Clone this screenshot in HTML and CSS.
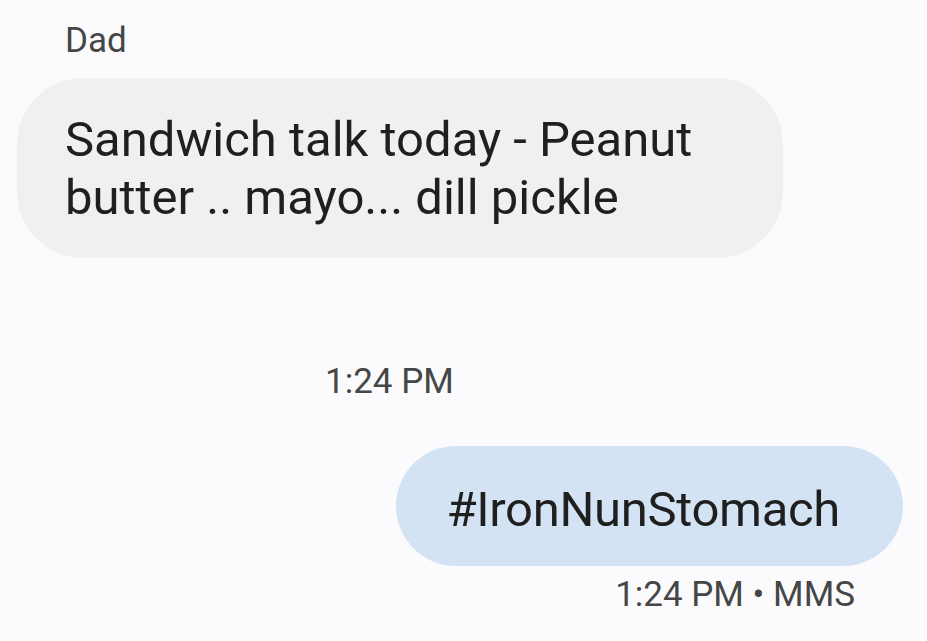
FILE: index.html
```html
<!DOCTYPE html>
<html>
<head>
<meta charset="utf-8">
<link rel="stylesheet" href="styles.css">
</head>
<body>
<div class="thread">
  <div class="sender">Dad</div>
  <div class="bubble in">Sandwich talk today - Peanut butter .. mayo... dill pickle</div>
  <div class="timestamp">1:24 PM</div>
  <div class="bubble out">#IronNunStomach</div>
  <div class="meta">1:24 PM • MMS</div>
</div>
</body>
</html>
```
FILE: styles.css
```css
html, body {
  margin: 0;
  padding: 0;
  background: #fbfbfe;
}
.thread {
  display: flex;
  flex-direction: column;
  align-items: flex-start;
  font-family: Roboto, "Noto Sans", sans-serif;
  color: #1f1f1f;
  width: 927px;
  height: 641px;
  overflow: hidden;
}
.sender {
  font-size: 35px;
  line-height: 44px;
  color: #444746;
  margin: 19px 0 0 65px;
}
.bubble {
  font-size: 49px;
  line-height: 58px;
  box-sizing: border-box;
}
.bubble.in {
  margin: 15px 0 0 17px;
  width: 766px;
  padding: 33px 40px 31px 48px;
  background: #f0f0f3;
  border-radius: 66px;
}
.timestamp {
  font-size: 35px;
  line-height: 44px;
  color: #444746;
  margin: 102px 0 0 325px;
}
.bubble.out {
  align-self: flex-end;
  margin: 42px 24px 0 0;
  height: 120px;
  padding: 35px 63px 27px 50px;
  background: #d3e3f3;
  border-radius: 60px;
  white-space: nowrap;
  letter-spacing: -0.33px;
}
.meta {
  align-self: flex-end;
  font-size: 35px;
  line-height: 44px;
  color: #444746;
  margin: 7px 72px 0 0;
}
```
